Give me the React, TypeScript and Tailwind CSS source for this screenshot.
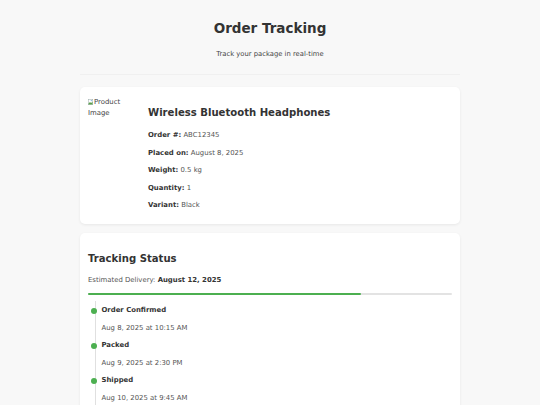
import React from 'react';

const details = [
  { label: 'Order #:', value: 'ABC12345' },
  { label: 'Placed on:', value: 'August 8, 2025' },
  { label: 'Weight:', value: '0.5 kg' },
  { label: 'Quantity:', value: '1' },
  { label: 'Variant:', value: 'Black' },
];

const steps = [
  { title: 'Order Confirmed', time: 'Aug 8, 2025 at 10:15 AM' },
  { title: 'Packed', time: 'Aug 9, 2025 at 2:30 PM' },
  { title: 'Shipped', time: 'Aug 10, 2025 at 9:45 AM' },
];

function BrokenImage() {
  return (
    <svg width="5" height="6" viewBox="0 0 5 6" className="inline-block align-[-1px] mr-[1px]">
      <rect x="0.25" y="0.25" width="4.5" height="5.5" fill="#fff" stroke="#9aa" strokeWidth="0.5" />
      <path d="M0.5 4.5 L2 3 L3 4 L4.5 2.8 V5.5 H0.5Z" fill="#5a9e4b" />
      <circle cx="3.3" cy="1.6" r="0.6" fill="#6aa8d8" />
    </svg>
  );
}

export default function App() {
  return (
    <div className="min-h-screen bg-[#f8f8f8] text-[#333] font-['DejaVu_Sans',sans-serif]">
      <div className="w-[380px] mx-auto">
        {/* Header */}
        <header className="text-center border-b border-[#f0f0f0] pt-[19px] h-[75px]">
          <h1 className="text-[13.5px] leading-[18px] font-bold">Order Tracking</h1>
          <p className="text-[6.8px] leading-[9px] mt-[13px] text-[#444]">Track your package in real-time</p>
        </header>

        {/* Product card */}
        <section className="mt-[12px] bg-white rounded-[5px] shadow-[0_1px_3px_rgba(0,0,0,0.07)] px-[8px] pt-[10px] pb-[14px] flex gap-[6px]">
          <div className="w-[54px] text-[6.9px] leading-[11px] text-[#444] shrink-0">
            <BrokenImage />Product Image
          </div>
          <div className="flex-1 pt-[10px]">
            <h2 className="text-[10.1px] leading-[12px] font-bold">Wireless Bluetooth Headphones</h2>
            <div className="mt-[12px] flex flex-col gap-[8.6px] text-[6.9px] leading-[9px]">
              {details.map((d) => (
                <p key={d.label}>
                  <span className="font-bold">{d.label}</span>{' '}
                  <span className="text-[#555]">{d.value}</span>
                </p>
              ))}
            </div>
          </div>
        </section>

        {/* Tracking card */}
        <section className="mt-[9px] bg-white rounded-[5px] shadow-[0_1px_3px_rgba(0,0,0,0.07)] px-[8px] pt-[20px] pb-[16px]">
          <h2 className="text-[10.1px] leading-[12px] font-bold">Tracking Status</h2>
          <p className="mt-[11px] text-[6.9px] leading-[9px] text-[#555]">
            Estimated Delivery: <span className="font-bold text-[#333]">August 12, 2025</span>
          </p>
          <div className="mt-[7.5px] h-[2px] bg-[#e3e3e3] rounded-full">
            <div className="h-full w-3/4 bg-[#4caf50] rounded-full" />
          </div>
          <div className="mt-[6px] ml-[7px] border-l border-[#e0e0e0] pl-[5.5px] pt-[5.5px] pb-[20px] flex flex-col gap-[8.5px] text-[6.9px] leading-[9px]">
            {steps.map((s) => (
              <React.Fragment key={s.title}>
                <p className="relative font-bold">
                  <span className="absolute left-[-10.5px] top-[1.5px] w-[6px] h-[6px] rounded-full bg-[#4caf50]" />
                  {s.title}
                </p>
                <p className="text-[#555]">{s.time}</p>
              </React.Fragment>
            ))}
          </div>
        </section>
      </div>
    </div>
  );
}
